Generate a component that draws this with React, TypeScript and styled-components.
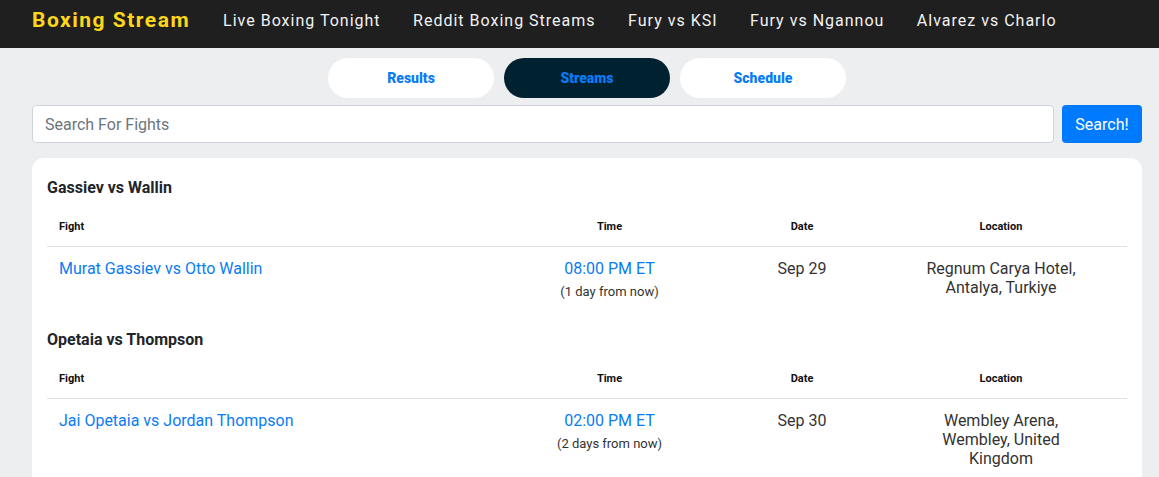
import React from 'react'
import styled, { createGlobalStyle } from 'styled-components'

const GlobalStyle = createGlobalStyle`
    body {
        margin: 0;
        background: #edeef0;
        font-family: Roboto, "Liberation Sans", Arial, sans-serif;
        color: #212529;
    }
    * { box-sizing: border-box; }
`

const fights = [
    {
        title: 'Gassiev vs Wallin',
        name: 'Murat Gassiev vs Otto Wallin',
        time: '08:00 PM ET',
        from: '(1 day from now)',
        date: 'Sep 29',
        location: 'Regnum Carya Hotel, Antalya, Turkiye',
    },
    {
        title: 'Opetaia vs Thompson',
        name: 'Jai Opetaia vs Jordan Thompson',
        time: '02:00 PM ET',
        from: '(2 days from now)',
        date: 'Sep 30',
        location: 'Wembley Arena, Wembley, United Kingdom',
    },
]

const navLinks = ['Live Boxing Tonight', 'Reddit Boxing Streams', 'Fury vs KSI', 'Fury vs Ngannou', 'Alvarez vs Charlo']

export default function App() {
    return (
        <>
            <GlobalStyle />
            <TopBar>
                <Logo>Boxing Stream</Logo>
                <NavList>
                    {navLinks.map((l) => <NavLink key={l}>{l}</NavLink>)}
                </NavList>
            </TopBar>
            <Main>
                <Tabs>
                    <Tab>Results</Tab>
                    <Tab active>Streams</Tab>
                    <Tab>Schedule</Tab>
                </Tabs>
                <SearchRow>
                    <SearchInput placeholder="Search For Fights" />
                    <SearchButton type="button">Search!</SearchButton>
                </SearchRow>
                <Card>
                    {fights.map((f) => (
                        <Section key={f.title}>
                            <SectionTitle>{f.title}</SectionTitle>
                            <Table>
                                <colgroup>
                                    <col style={{ width: 443 }} />
                                    <col style={{ width: 239 }} />
                                    <col style={{ width: 146 }} />
                                    <col style={{ width: 252 }} />
                                </colgroup>
                                <thead>
                                    <tr>
                                        <Th align="left">Fight</Th>
                                        <Th>Time</Th>
                                        <Th>Date</Th>
                                        <Th>Location</Th>
                                    </tr>
                                </thead>
                                <tbody>
                                    <tr>
                                        <Td align="left"><FightLink>{f.name}</FightLink></Td>
                                        <Td>
                                            <FightLink>{f.time}</FightLink>
                                            <FromNow>{f.from}</FromNow>
                                        </Td>
                                        <Td>{f.date}</Td>
                                        <Td><Location>{f.location}</Location></Td>
                                    </tr>
                                </tbody>
                            </Table>
                        </Section>
                    ))}
                </Card>
            </Main>
        </>
    )
}

const TopBar = styled.header`
    display: flex;
    align-items: center;
    height: 48px;
    padding: 0 32px 8px;
    background: #1f1f1f;
`

const Logo = styled.div`
    color: #ffd71a;
    font-size: 21px;
    font-weight: 700;
    letter-spacing: 1.5px;
    margin-right: 33px;
`

const NavList = styled.nav`
    display: flex;
    gap: 32.5px;
`

const NavLink = styled.a`
    color: #f2f2f2;
    font-size: 16px;
    letter-spacing: 1px;
    cursor: pointer;
`

const Main = styled.main`
    padding: 10px 17px 0 32px;
`

const Tabs = styled.div`
    display: flex;
    justify-content: center;
    gap: 10px;
`

const Tab = styled.button<{ active?: boolean }>`
    width: 166px;
    height: 40px;
    border: none;
    border-radius: 20px;
    background: ${(p) => (p.active ? '#002230' : '#fff')};
    color: #0a7cf5;
    font-family: Roboto, "Liberation Sans", Arial, sans-serif;
    font-size: 14px;
    font-weight: 900;
    cursor: pointer;
`

const SearchRow = styled.div`
    display: flex;
    gap: 8px;
    margin-top: 7px;
`

const SearchInput = styled.input`
    flex: 1;
    height: 38px;
    padding: 6px 12px;
    border: 1px solid #ced4da;
    border-radius: 4px;
    font-family: Roboto, "Liberation Sans", Arial, sans-serif;
    font-size: 16px;
    color: #495057;
    outline: none;
    &::placeholder { color: #6c757d; }
`

const SearchButton = styled.button`
    width: 80px;
    height: 38px;
    border: none;
    border-radius: 4px;
    background: #007bff;
    color: #fff;
    font-family: Roboto, "Liberation Sans", Arial, sans-serif;
    font-size: 16px;
    cursor: pointer;
`

const Card = styled.div`
    margin-top: 15px;
    padding: 20px 15px;
    background: #fff;
    border-radius: 12px;
`

const Section = styled.section`
    & + & { margin-top: 18px; }
`

const SectionTitle = styled.h3`
    margin: 0 0 11px;
    font-size: 16px;
    line-height: 19px;
    font-weight: 700;
    color: #212529;
`

const Table = styled.table`
    width: 100%;
    table-layout: fixed;
    border-collapse: collapse;
`

const Th = styled.th<{ align?: string }>`
    padding: 12px;
    font-size: 11px;
    line-height: 14px;
    font-weight: 700;
    color: #111;
    text-align: ${(p) => p.align || 'center'};
    border-bottom: 1px solid #dee2e6;
`

const Td = styled.td<{ align?: string }>`
    padding: 12px;
    font-size: 16px;
    line-height: 19px;
    color: #333;
    vertical-align: top;
    text-align: ${(p) => p.align || 'center'};
`

const FightLink = styled.a`
    display: block;
    color: #0a7cf5;
    cursor: pointer;
`

const FromNow = styled.div`
    margin-top: 6px;
    font-size: 13px;
    line-height: 16px;
    color: #333;
`

const Location = styled.div`
    max-width: 175px;
    margin: 0 auto;
`
